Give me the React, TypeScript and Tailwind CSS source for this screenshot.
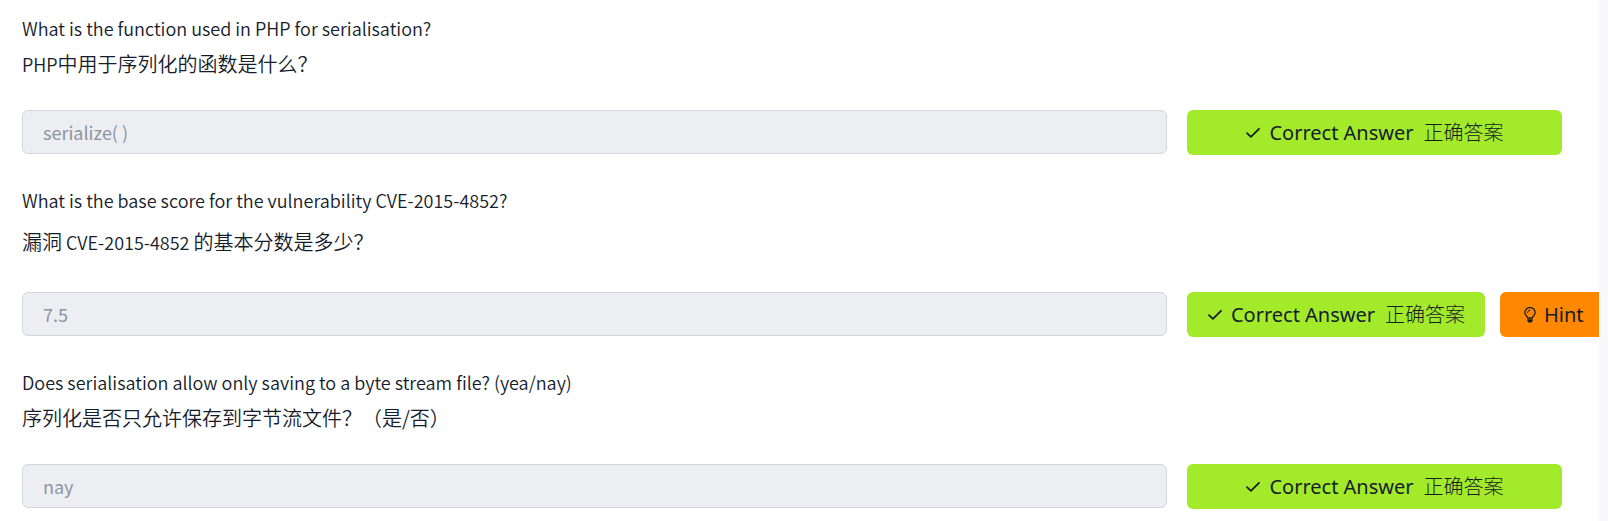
import clsx from "clsx";
import { ReactNode } from "react";

type Question = {
  id: string;
  question: string;
  translation: ReactNode;
  answer: string;
  spaced?: boolean;
  hint?: boolean;
};

const questions: Question[] = [
  {
    id: "php-function",
    question: "What is the function used in PHP for serialisation?",
    translation: (
      <>
        <span className="text-lg/9">PHP</span>中用于序列化的函数是什么？
      </>
    ),
    answer: "serialize( )",
  },
  {
    id: "cve-score",
    question: "What is the base score for the vulnerability CVE-2015-4852?",
    translation: (
      <>
        漏洞<span className="text-lg/9"> CVE-2015-4852 </span>的基本分数是多少？
      </>
    ),
    answer: "7.5",
    spaced: true,
    hint: true,
  },
  {
    id: "byte-stream",
    question: "Does serialisation allow only saving to a byte stream file? (yea/nay)",
    translation: "序列化是否只允许保存到字节流文件？（是/否）",
    answer: "nay",
  },
];

function CheckIcon() {
  return (
    <svg className="size-4 shrink-0" viewBox="0 0 16 16" fill="none" aria-hidden="true">
      <path
        d="M2 8.2l3.900 3.600L14 3.800"
        stroke="currentColor"
        strokeWidth="1.8"
        strokeLinecap="round"
        strokeLinejoin="round"
      />
    </svg>
  );
}

function BulbIcon() {
  return (
    <svg className="h-4 w-3 shrink-0" viewBox="0 0 12 16" fill="none" aria-hidden="true">
      <path
        d="M3.6 11C3.4 9 .9 8.300.9 5.400a5.100 4.800 0 0 1 10.200 0C11.100 8.300 8.600 9 8.400 11Z"
        stroke="currentColor"
        strokeWidth="1.3"
        strokeLinejoin="round"
      />
      <path d="M3.500 5.500A2.500 2.500 0 0 1 6 3.200" stroke="currentColor" strokeLinecap="round" />
      <path d="M3.300 12.300h5.400v1.500L7.600 15.500H4.400L3.300 13.800Z" fill="currentColor" />
    </svg>
  );
}

function QuestionRow({ id, question, translation, answer, spaced, hint }: Question) {
  return (
    <div>
      <label htmlFor={id} className="block text-lg/9 font-[350]">
        {question}
      </label>
      <p className={clsx("text-xl/9 font-[350]", spaced ? "mt-1.5 mb-8" : "mb-7")}>
        {translation}
      </p>
      <div className="flex gap-5">
        <input
          id={id}
          type="text"
          value={answer}
          disabled
          className="h-11 min-w-0 flex-1 rounded-md border border-[#d3d6de] bg-[#edeef2] px-5 text-lg text-[#8d94a3]"
        />
        <div className="flex w-[375px] shrink-0 gap-[15px] font-['Noto_Sans','Noto_Sans_CJK_SC',sans-serif] text-xl">
          <button
            type="button"
            className={clsx(
              "flex h-[45px] items-center justify-center gap-2 rounded-md bg-[#a3ea2a] whitespace-nowrap",
              hint ? "w-[298px] shrink-0" : "w-full"
            )}
          >
            <CheckIcon />
            <span>Correct Answer</span>
            <span className="ml-0.5 font-light">正确答案</span>
          </button>
          {hint && (
            <button
              type="button"
              className="flex h-[45px] shrink-0 items-center gap-2 rounded-md bg-[#ff8800] px-6"
            >
              <BulbIcon />
              Hint
            </button>
          )}
        </div>
      </div>
    </div>
  );
}

export default function App() {
  return (
    <div className="min-h-screen bg-[#f9f9fb] pr-[9px]">
      <main className="flex min-h-screen flex-col gap-[27px] overflow-hidden bg-white pt-2.5 pr-[37px] pb-3 pl-[22px] font-['Noto_Sans_CJK_SC',sans-serif] text-[#151c2b]">
        {questions.map((item) => (
          <QuestionRow key={item.id} {...item} />
        ))}
      </main>
    </div>
  );
}
